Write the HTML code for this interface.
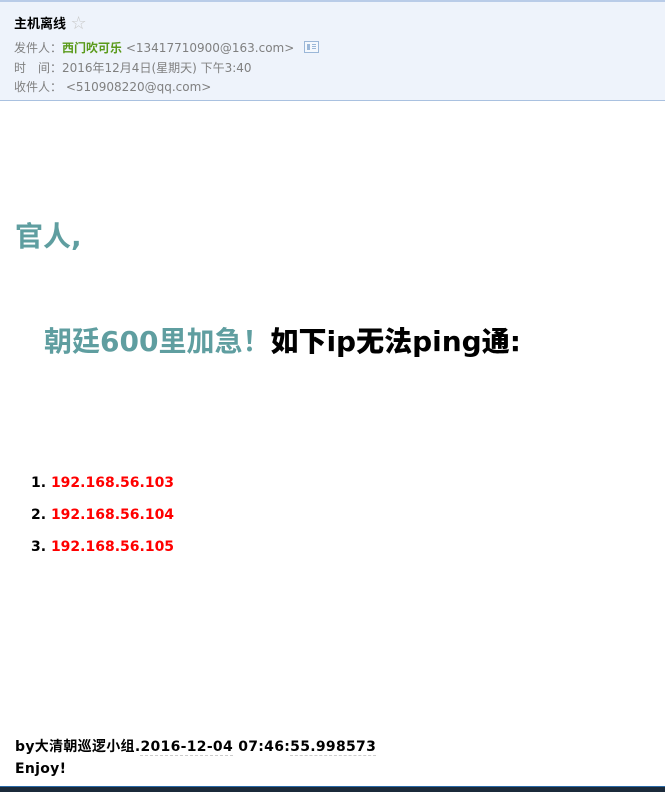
<!DOCTYPE html>
<html><head><meta charset="utf-8"><style>
html,body{margin:0;padding:0;width:665px;height:792px;overflow:hidden;background:#fff;font-family:"DejaVu Sans","Noto Sans CJK SC",sans-serif;}
.hd{position:absolute;left:0;top:0;width:665px;height:101px;background:#eef3fb;border-top:2px solid #b9cce8;border-bottom:1px solid #a9c1e0;box-sizing:border-box;font-family:"DejaVu Sans","Noto Sans CJK SC",sans-serif;}
.t{position:absolute;left:14px;top:11px;font-size:13px;font-weight:bold;color:#000;}
.t span{color:#c8c8c8;font-weight:normal;font-size:18px;vertical-align:-1px}
.l{position:absolute;left:14px;font-size:12px;color:#808080;white-space:nowrap;}
.g{color:#5a9a1a;font-weight:bold;}
.ic{display:inline-block;width:13px;height:10px;border:1px solid #9bb7d8;vertical-align:-1px;margin-left:6px;position:relative;background:#f4f8fd}
.ic:before{content:"";position:absolute;left:2px;top:2px;width:3px;height:6px;background:#9bb7d8}
.ic:after{content:"";position:absolute;left:7px;top:2px;width:4px;height:1px;background:#9bb7d8;box-shadow:0 2px #9bb7d8,0 4px #9bb7d8}
.h1{position:absolute;left:15px;top:215px;font-size:28px;font-weight:bold;color:#5f9ea0;white-space:nowrap;}
.h2{position:absolute;left:44px;top:320px;font-size:28px;font-weight:bold;color:#5f9ea0;white-space:nowrap;}
.h2 b{color:#000}
ol{position:absolute;left:31px;top:475px;margin:0;padding:0;list-style:none;font-size:14px;font-weight:bold;}
li{height:32px;white-space:nowrap}
li span{color:#f00}
.f{position:absolute;left:15px;top:736px;font-size:14px;font-weight:bold;color:#000;line-height:22px;white-space:nowrap;letter-spacing:0.3px}
.f u{text-decoration:none;border-bottom:1px dashed #ccc}
.bar{position:absolute;left:0;top:786px;width:665px;height:6px;background:#1b2a3a;border-top:1px solid #2a6aa8;box-sizing:border-box}
</style></head><body>
<div class="hd">
<div class="t">主机离线 <span>☆</span></div>
<div class="l" style="top:37px">发件人：<span class="g">西门吹可乐</span> &lt;13417710900@163.com&gt; <span class="ic"></span></div>
<div class="l" style="top:57px">时　间：2016年12月4日(星期天) 下午3:40</div>
<div class="l" style="top:76px">收件人： &lt;510908220@qq.com&gt;</div>
</div>
<div class="h1">官人,</div>
<div class="h2">朝廷600里加急！<b>如下ip无法ping通:</b></div>
<ol>
<li>1. <span>192.168.56.103</span></li>
<li>2. <span>192.168.56.104</span></li>
<li>3. <span>192.168.56.105</span></li>
</ol>
<div class="f">by大清朝巡逻小组.<u>2016-12-04</u> 07:46:<u>55.998573</u><br>Enjoy!</div>
<div class="bar"></div>
</body></html>
